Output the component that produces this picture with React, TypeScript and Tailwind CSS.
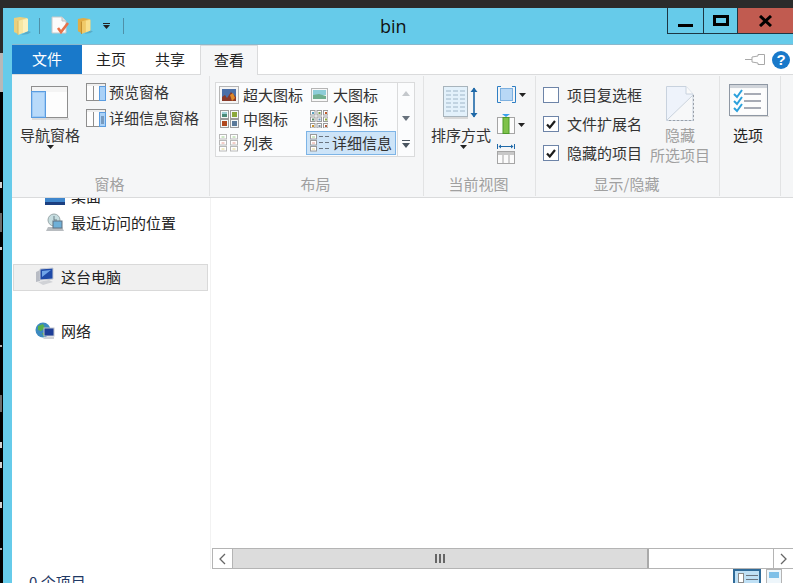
const cjk = "[font-family:'Noto_Sans_CJK_SC','Liberation_Sans',sans-serif]";

function Folder({ w = 18, h = 20, dark }: { w?: number; h?: number; dark?: boolean }) {
  const back = dark ? "#e2ad45" : "#e9cf7e";
  const front = dark ? "#f0c968" : "#f7e6a2";
  const hi = dark ? "#f9e08e" : "#fcf1bf";
  return (
    <svg width={w} height={h} viewBox="0 0 18 20">
      <path d="M15 15 L18 16 L15 18 L8 19 Z" fill="#4f93ad" opacity="0.55" />
      <path d="M1 2 L7 1 L14 2 L14 15 L5 18 L1 16 Z" fill={back} />
      <path d="M5 5 L14 2 L15 3 L15 15 L5 19 Z" fill={front} />
      <path d="M10 4 L15 3 L15 15 L10 17 Z" fill={hi} />
      <path d="M5 5 V19" stroke={dark ? "#b98528" : "#d8b964"} />
    </svg>
  );
}

function DocCheck() {
  return (
    <svg width="19" height="19" viewBox="0 0 19 19">
      <path d="M1 1 H11 L15 5 V17 H1 Z" fill="#fbfbfb" stroke="#c9c9c9" />
      <path d="M11 1 V5 H15" fill="#e2e2e2" stroke="#c0c0c0" />
      <path d="M7 12 L10 16 L17 7" fill="none" stroke="#e8724a" strokeWidth="2.6" />
    </svg>
  );
}

function Caret({ color = "#222" }: { color?: string }) {
  return (
    <svg width="7" height="4" viewBox="0 0 7 4" className="block">
      <path d="M0 0 H7 L3.5 4 Z" fill={color} />
    </svg>
  );
}

function NavPaneIcon() {
  return (
    <svg width="38" height="34" viewBox="0 0 38 34">
      <rect x="0.5" y="0.5" width="36" height="31" fill="#fdfdfd" stroke="#8e8e8e" />
      <rect x="1" y="1" width="35" height="5" fill="#f4f4f4" />
      <rect x="0.5" y="5.5" width="14" height="26" fill="#9cc9f5" stroke="#5a9ce0" />
      <rect x="2" y="7" width="11" height="23" fill="#b8dafa" />
      <rect x="1" y="32" width="37" height="2" fill="#dcdcdc" />
    </svg>
  );
}

function PaneIcon({ details }: { details?: boolean }) {
  return (
    <svg width="20" height="18" viewBox="0 0 20 18">
      <rect x="0.5" y="0.5" width="19" height="17" fill="#fdfdfd" stroke="#8e8e8e" />
      <rect x="1" y="1" width="18" height="2" fill="#efefef" />
      <line x1="7.5" y1="3" x2="7.5" y2="17" stroke="#8e8e8e" />
      <rect x="13.5" y="3.5" width="6" height="14" fill="#a9d1f7" stroke="#5a9ce0" />
      {details && <path d="M15 8 H18 M15 10 H18 M15 12 H18 M15 14 H18" stroke="#44648a" />}
    </svg>
  );
}

function Thumb({ kind }: { kind: string }) {
  if (kind === "xl")
    return (
      <svg width="20" height="18" viewBox="0 0 20 18">
        <rect x="0.5" y="0.5" width="19" height="17" fill="#f5f5f5" stroke="#b5b5b5" />
        <rect x="3" y="3" width="14" height="12" fill="#4a6fa8" />
        <path d="M3 15 V11 L6 9 L8 12 L12 6 L17 11 V15 Z" fill="#8a3a2a" />
        <path d="M11 9 L14 7 L16 12 L13 15 Z" fill="#e08a2a" />
      </svg>
    );
  if (kind === "l")
    return (
      <svg width="17" height="14" viewBox="0 0 17 14">
        <rect x="0.5" y="0.5" width="16" height="13" fill="#f8f8f8" stroke="#b5b5b5" />
        <rect x="2" y="2" width="13" height="5" fill="#8ecdd8" />
        <path d="M2 7 L8 6 L15 8 V11 H2 Z" fill="#6fae8e" />
      </svg>
    );
  if (kind === "m")
    return (
      <svg width="19" height="18" viewBox="0 0 19 18">
        <rect x="0.5" y="0.5" width="8" height="8" fill="#f4f8f8" stroke="#9a9a9a" />
        <rect x="10.5" y="0.5" width="8" height="8" fill="#f4f8f8" stroke="#9a9a9a" />
        <rect x="0.5" y="9.5" width="8" height="8" fill="#f4f8f8" stroke="#9a9a9a" />
        <rect x="10.5" y="9.5" width="8" height="8" fill="#f4f8f8" stroke="#9a9a9a" />
        <rect x="2" y="2" width="5" height="2" fill="#9ccfd6" />
        <rect x="2" y="4" width="5" height="3" fill="#4a8a78" />
        <rect x="12" y="2" width="5" height="5" fill="#8aa83a" />
        <rect x="2" y="11" width="5" height="5" fill="#b0481e" />
        <rect x="12" y="11" width="5" height="5" fill="#5a7a9a" />
      </svg>
    );
  if (kind === "s") {
    const colors = ["#5aa0c0", "#7aa04a", "#c05a2a", "#5a8a6a", "#6a90b8", "#8aa83a", "#c8902a", "#7a8a9a", "#b05a3a"];
    return (
      <svg width="18" height="18" viewBox="0 0 18 18">
        {colors.map((c, i) => (
          <g key={i}>
            <rect x={0.5 + (i % 3) * 6.5} y={0.5 + Math.floor(i / 3) * 6.5} width="4.5" height="4.5" fill="#fff" stroke="#9a9a9a" />
            <rect x={2 + (i % 3) * 6.5} y={2 + Math.floor(i / 3) * 6.5} width="2" height="2" fill={c} />
          </g>
        ))}
      </svg>
    );
  }
  const bullets = ["#9ccf8c", "#e59a8e", "#e4d88a"];
  if (kind === "list")
    return (
      <svg width="20" height="18" viewBox="0 0 20 18">
        {[0, 11].map((x) => (
          <g key={x}>
            {bullets.map((c, i) => (
              <g key={i}>
                <rect x={x + 0.5} y={0.5 + i * 6} width="7" height="4.5" fill="#fff" stroke="#b8b8b8" />
                <rect x={x + 2.5} y={2.5 + i * 6} width="3" height="1" fill={c} />
              </g>
            ))}
          </g>
        ))}
      </svg>
    );
  return (
    <svg width="20" height="18" viewBox="0 0 20 18">
      {bullets.map((c, i) => (
        <g key={i}>
          <rect x="0.5" y={0.5 + i * 6} width="6" height="4.5" fill="#fff" stroke="#9a9a9a" />
          <rect x="2" y={2.5 + i * 6} width="3" height="1" fill={c} />
          <path d={`M9 ${2.5 + i * 6} H13 M15 ${2.5 + i * 6} H19`} stroke="#6a7480" />
        </g>
      ))}
    </svg>
  );
}

function SortIcon() {
  return (
    <svg width="37" height="33" viewBox="0 0 37 33">
      <rect x="0.5" y="0.5" width="24" height="30" fill="#e3f1fb" stroke="#a8b4bc" />
      <rect x="1" y="31" width="24" height="2" fill="#d8d8d8" />
      {[5, 9, 13, 17, 21, 25].map((y) => (
        <path key={y} d={`M3 ${y} H8 M10 ${y} H15 M17 ${y} H22`} stroke="#9fb6c8" />
      ))}
      <path d="M31 2 V31" stroke="#1f69a8" strokeWidth="1.6" />
      <path d="M27.5 6 L31 1.5 L34.5 6 Z M27.5 27 L31 31.5 L34.5 27 Z" fill="#1f69a8" />
    </svg>
  );
}

function GroupByIcon() {
  return (
    <svg width="19" height="17" viewBox="0 0 19 17">
      <path d="M4 .5 H.5 V16.5 H4 M15 .5 H18.5 V16.5 H15" fill="none" stroke="#2f7fc4" />
      <rect x="3.5" y="2.5" width="12" height="12" fill="#b8d8f6" stroke="#7db0df" />
    </svg>
  );
}

function ColumnsIcon() {
  return (
    <svg width="18" height="21" viewBox="0 0 18 21">
      <path d="M5 0 H13 L9 3 Z" fill="#39a0ea" />
      <rect x="0.5" y="3.5" width="17" height="16" fill="#fcfcfc" stroke="#a5a5a5" />
      <rect x="6" y="3.5" width="6" height="16" fill="#7fc24a" stroke="#4d9a2a" />
    </svg>
  );
}

function SizeColumnsIcon() {
  return (
    <svg width="18" height="20" viewBox="0 0 18 20">
      <path d="M.5 0 V5 M17.5 0 V5 M2 2.5 H16" stroke="#1f69a8" fill="none" />
      <path d="M4 .5 L1.5 2.5 L4 4.5 Z M14 .5 L16.5 2.5 L14 4.5 Z" fill="#1f69a8" />
      <rect x="0.5" y="7.5" width="17" height="12" fill="#fbfbfb" stroke="#a5a5a5" />
      <rect x="1" y="8" width="16" height="3" fill="#c8c8c8" />
      <path d="M6 11 V19 M12 11 V19" stroke="#a5a5a5" />
    </svg>
  );
}

function Check({ checked }: { checked?: boolean }) {
  return (
    <span className="flex h-4 w-4 shrink-0 items-center justify-center border border-[#6d84a8] bg-white">
      {checked && (
        <svg width="10" height="9" viewBox="0 0 10 9">
          <path d="M1 4.5 L3.8 7.5 L9 1" fill="none" stroke="#1c1c1c" strokeWidth="2.2" />
        </svg>
      )}
    </span>
  );
}

function HideIcon() {
  return (
    <svg width="28" height="35" viewBox="0 0 28 35">
      <path d="M.5 .5 H20 L27 8 V34 H.5 Z" fill="#eef3fb" />
      <path d="M27 8 L.5 34 H27 Z" fill="#f7f8f9" />
      <path d="M.5 34.5 V.5 H20 L27 8 V34.5 Z" fill="none" stroke="#c8d2de" />
      <path d="M20 .5 V8 H27" fill="#fafafa" stroke="#c8d2de" />
      <path d="M27.5 9 V34.5 H1" fill="none" stroke="#9aa0a8" strokeDasharray="2 2" />
      <path d="M27 9 L1 34" stroke="#c8d2de" />
    </svg>
  );
}

function OptionsIcon() {
  return (
    <svg width="40" height="33" viewBox="0 0 40 33">
      <rect x="0.5" y="0.5" width="38" height="31" fill="#fafafa" stroke="#8f98a4" />
      <rect x="1" y="1" width="37" height="3" fill="#d0d4da" />
      <rect x="3" y="5" width="33" height="25" fill="#fdfdfd" />
      <rect x="1" y="32" width="39" height="1" fill="#d4d4d4" />
      {[10, 17, 24].map((y) => (
        <g key={y}>
          <path d={`M5 ${y} L8 ${y + 3} L13 ${y - 4}`} fill="none" stroke="#2aa0dc" strokeWidth="2" />
          <path d={`M15 ${y} H32`} stroke="#8a8f9c" strokeWidth="1.5" />
        </g>
      ))}
    </svg>
  );
}

function RecentIcon() {
  return (
    <svg width="20" height="20" viewBox="0 0 20 20">
      <circle cx="9" cy="7" r="6" fill="#c6dde0" stroke="#9aa8aa" />
      <path d="M9 3 V7 H12" stroke="#6a8088" fill="none" />
      <path d="M3 14 H17 L19 18 H1 Z" fill="#b8bcc0" />
      <rect x="8" y="8" width="9" height="7" fill="#6fb0d8" stroke="#607080" />
    </svg>
  );
}

function PcIcon() {
  return (
    <svg width="20" height="20" viewBox="0 0 20 20">
      <path d="M1 5 L5 3 V14 L1 15 Z" fill="#b8bcc4" />
      <path d="M5 2 L18 1 V12 L5 13 Z" fill="#1e4aa8" stroke="#c8ccd4" />
      <path d="M7 4 L16 3 L7 10 Z" fill="#6fa4e8" />
      <path d="M3 15 L14 13 L18 15 L8 18 Z" fill="#d0d2d6" />
    </svg>
  );
}

function NetIcon() {
  return (
    <svg width="20" height="20" viewBox="0 0 20 20">
      <circle cx="8" cy="9" r="7.5" fill="#3c8ac0" />
      <path d="M3 5 L8 3 L10 7 L6 10 L3 9 Z M7 12 L11 12 L9 16 Z" fill="#58b04a" />
      <rect x="9" y="7" width="10" height="8" fill="#1e3e98" stroke="#c0c4cc" />
      <path d="M10 16 H19 L19 18 H8 Z" fill="#d0d2d6" />
    </svg>
  );
}

function DesktopIcon() {
  return (
    <svg width="20" height="20" viewBox="0 0 20 20">
      <rect x="0" y="3" width="20" height="13" fill="#3f86cc" />
      <rect x="0" y="16" width="20" height="3" fill="#1c3f80" />
    </svg>
  );
}

function Group({ width, label, children }: { width: string; label: string; children: React.ReactNode }) {
  return (
    <div className={`${width} flex shrink-0 flex-col border-r border-[#e2e3e4]`}>
      <div className="flex h-[99px]">{children}</div>
      <div className="h-[22px] pr-[2px] text-center text-[15px] leading-[19px] text-[#a0a0a0]">{label}</div>
    </div>
  );
}

function GalleryCell({ kind, text, width, selected }: { kind: string; text: string; width: string; selected?: boolean }) {
  return (
    <div className={`flex h-6 items-center ${width} ${selected ? "border border-[#7db4e6] bg-[#cde4f8]" : ""}`}>
      <span className={`flex shrink-0 justify-center ${selected ? "w-[25px]" : "w-[26px]"}`}>
        <Thumb kind={kind} />
      </span>
      <span className={`whitespace-nowrap ${selected ? "" : "pl-[1px]"}`}>{text}</span>
    </div>
  );
}

function NavRow({ icon, text, selected, indent, lift }: { icon: React.ReactNode; text: string; selected?: boolean; indent: string; lift: string }) {
  return (
    <div className={`flex items-center gap-[6px] ${indent} ${selected ? "h-[27px] w-[195px] border border-[#d9d9d9] bg-[#f0f0f0]" : "h-[27px]"}`}>
      <span className={`flex w-5 shrink-0 justify-center ${lift}`}>{icon}</span>
      <span className={`text-[15px] leading-5 text-[#222] ${lift}`}>{text}</span>
    </div>
  );
}

export default function App() {
  return (
    <div className={`flex h-[583px] w-[793px] flex-col overflow-hidden bg-[#2b2b2b] ${cjk} text-[15px] text-[#333]`}>
      <div className="h-2 shrink-0 bg-[#2b2b2b]" />
      <div className="flex min-h-0 flex-1">
        {/* sliver of the desktop behind the window */}
        <div className="flex w-[3px] shrink-0 flex-col bg-black">
          <div className="h-[45px] shrink-0 bg-[#2b2b2b]" />
          <div className="h-[39px] shrink-0 bg-[#b8b8b8]" />
          <div className="mt-[90px] h-[6px] w-[2px] shrink-0 bg-[#d0d0d0]" />
          <div className="mt-[25px] h-[19px] w-[2px] shrink-0 bg-[#6a6a6a]" />
          <div className="mt-[15px] h-[3px] w-[2px] shrink-0 bg-[#d0d0d0]" />
          <div className="mt-[95px] h-[2px] w-[2px] shrink-0 bg-[#b0b0b0]" />
          <div className="mt-[48px] h-[17px] w-[2px] shrink-0 bg-[#6a6a6a]" />
          <div className="mt-[30px] h-[6px] w-[2px] shrink-0 bg-[#d0d0d0]" />
          <div className="mt-[14px] h-[6px] w-[2px] shrink-0 bg-[#d0d0d0]" />
          <div className="mt-[34px] h-[6px] w-[2px] shrink-0 bg-[#d0d0d0]" />
          <div className="mt-[40px] h-[2px] w-[2px] shrink-0 bg-[#b0b0b0]" />
        </div>
        <div className="flex min-w-0 flex-1 bg-[#66cbea]">
          <div className="w-[9px] shrink-0" />
          <div className="flex min-w-0 flex-1 flex-col">
            {/* title bar */}
            <div className="flex h-[37px] shrink-0 border-b border-[#8ab8cc]">
              <div className="flex w-[655px] shrink-0 items-center pb-[1px]">
                <span className="ml-[1px] mr-[8px]"><Folder /></span>
                <span className="mr-[11px] h-[16px] w-[1px] bg-[#4f90a8]" />
                <span className="mr-[7px]"><DocCheck /></span>
                <Folder w={16} dark />
                <span className="ml-[10px] mr-[13px] flex flex-col gap-[1px]">
                  <span className="h-[1px] w-[7px] bg-[#222]" />
                  <Caret />
                </span>
                <span className="h-[16px] w-[1px] bg-[#4f90a8]" />
                <span className="ml-[256px] font-['Open_Sans',sans-serif] text-[18px] leading-6 text-[#111]">bin</span>
              </div>
              <div className="flex h-[26px] border-b border-[#1c3644]">
                <div className="flex w-9 items-end justify-center border-l border-[#1c3644] pb-[6px]">
                  <span className="h-[3px] w-[15px] bg-black" />
                </div>
                <div className="flex w-[34px] items-center justify-center border-l border-[#1c3644]">
                  <span className="h-[11px] w-[16px] border-[3px] border-black" />
                </div>
                <div className="flex w-14 items-center justify-center border-l border-[#1c3644] bg-[#c15b50]">
                  <svg width="13" height="12" viewBox="0 0 13 12">
                    <path d="M1 1 L12 11 M12 1 L1 11" stroke="#000" strokeWidth="3" />
                  </svg>
                </div>
              </div>
            </div>
            {/* tabs */}
            <div className="flex h-[30px] shrink-0 items-stretch border-b border-[#dadbdc] bg-white">
              <div className="flex w-[70px] items-center justify-center bg-[#1979ca] text-white">文件</div>
              <div className="ml-[14px] flex w-[30px] items-center justify-center text-[#222]">主页</div>
              <div className="ml-[29px] flex w-[30px] items-center justify-center text-[#222]">共享</div>
              <div className="relative ml-[15px] mb-[-1px] flex w-[58px] items-center justify-center border-x border-t border-[#dadbdc] bg-[#f5f6f7] text-[#222]">查看</div>
              <div className="flex-1" />
              <div className="flex items-center pr-[3px]">
                <svg width="20" height="11" viewBox="0 0 20 11" className="mr-[7px]">
                  <path d="M0 5.5 H7" stroke="#a8a8a8" />
                  <path d="M7 3 L13 2 V0.5 L19.5 .5 V10.5 H13 V9 L7 8 Z" fill="#fff" stroke="#a8a8a8" />
                </svg>
                <span className="flex h-[18px] w-[18px] items-center justify-center rounded-full bg-[#1979ca] font-['Liberation_Sans',sans-serif] text-[15px] font-bold leading-none text-white">?</span>
              </div>
            </div>
            {/* ribbon */}
            <div className="flex h-[123px] shrink-0 border-b border-[#dadbdc] bg-[#f5f6f7] py-[1px]">
              <Group width="w-[198px]" label="窗格">
                <div className="flex w-[74px] flex-col items-center pt-[10px] pl-[2px]">
                  <span className="h-[34px]"><NavPaneIcon /></span>
                  <span className="mt-[5px] leading-5 text-[#333]">导航窗格</span>
                  <span className="mt-[0px]"><Caret /></span>
                </div>
                <div className="flex flex-col gap-[8px] pt-[7px]">
                  <div className="flex h-[18px] items-center gap-[3px]"><PaneIcon /><span className="whitespace-nowrap">预览窗格</span></div>
                  <div className="flex h-[18px] items-center gap-[3px]"><PaneIcon details /><span className="whitespace-nowrap">详细信息窗格</span></div>
                </div>
              </Group>
              <Group width="w-[214px]" label="布局">
                <div className="ml-[5px] mt-[6px] flex h-[75px] w-[200px] border border-[#dadbdc] bg-[#fbfcfd]">
                  <div className="flex w-[181px] flex-wrap content-start">
                    <GalleryCell kind="xl" text="超大图标" width="w-[90px]" />
                    <GalleryCell kind="l" text="大图标" width="w-[91px]" />
                    <GalleryCell kind="m" text="中图标" width="w-[90px]" />
                    <GalleryCell kind="s" text="小图标" width="w-[91px]" />
                    <GalleryCell kind="list" text="列表" width="w-[90px]" />
                    <GalleryCell kind="d" text="详细信息" width="w-[90px]" selected />
                  </div>
                  <div className="flex w-[17px] flex-col items-center justify-between border-l border-[#dadbdc] py-[8px]">
                    <svg width="8" height="5" viewBox="0 0 8 5"><path d="M0 5 L4 0 L8 5 Z" fill="#c4c8cc" /></svg>
                    <svg width="8" height="5" viewBox="0 0 8 5"><path d="M0 0 H8 L4 5 Z" fill="#67717c" /></svg>
                    <svg width="8" height="8" viewBox="0 0 8 8"><path d="M0 0 H8 V1 H0 Z M0 3 H8 L4 8 Z" fill="#4a5560" /></svg>
                  </div>
                </div>
              </Group>
              <Group width="w-[112px]" label="当前视图">
                <div className="flex w-[73px] flex-col items-center pt-[10px]">
                  <span className="ml-[2px] h-[33px]"><SortIcon /></span>
                  <span className="mt-[6px] ml-[1px] whitespace-nowrap leading-5">排序方式</span>
                  <span className="mt-[0px] ml-[5px]"><Caret /></span>
                </div>
                <div className="flex flex-col pt-[10px]">
                  <div className="flex h-[17px] items-center gap-[3px]"><GroupByIcon /><Caret /></div>
                  <div className="mt-[11px] flex h-[21px] items-center gap-[3px]"><ColumnsIcon /><Caret /></div>
                  <div className="mt-[9px]"><SizeColumnsIcon /></div>
                </div>
              </Group>
              <Group width="w-[184px]" label="显示/隐藏">
                <div className="flex w-[114px] flex-col gap-[13px] pl-[7px] pt-[11px]">
                  <div className="flex h-4 items-center gap-2 whitespace-nowrap"><Check /><span>项目复选框</span></div>
                  <div className="flex h-4 items-center gap-2 whitespace-nowrap"><Check checked /><span>文件扩展名</span></div>
                  <div className="flex h-4 items-center gap-2 whitespace-nowrap"><Check checked /><span>隐藏的项目</span></div>
                </div>
                <div className="flex w-[60px] flex-col items-center pt-[10px] text-[#a0a0a0]">
                  <span className="h-[35px]"><HideIcon /></span>
                  <span className="mt-[4px] leading-5">隐藏</span>
                  <span className="whitespace-nowrap leading-5">所选项目</span>
                </div>
              </Group>
              <Group width="w-[61px]" label="">
                <div className="flex w-full flex-col items-center pr-[4px] pt-[8px]">
                  <span className="h-[33px] pl-[2px]"><OptionsIcon /></span>
                  <span className="mt-[8px] leading-5 text-[#222]">选项</span>
                </div>
              </Group>
              <div className="flex-1" />
            </div>
            {/* body */}
            <div className="flex min-h-0 flex-1 bg-white">
              <div className="w-[199px] shrink-0 overflow-hidden border-r border-[#f2f2f2]">
                <div className="mt-[-14px]">
                  <NavRow indent="pl-[33px]" lift="pb-[4px]" icon={<DesktopIcon />} text="桌面" />
                  <NavRow indent="pl-[33px]" lift="pb-[4px]" icon={<RecentIcon />} text="最近访问的位置" />
                  <div className="mt-[26px] pl-[1px]">
                    <NavRow selected indent="pl-[21px]" lift="pb-[2px]" icon={<PcIcon />} text="这台电脑" />
                  </div>
                  <div className="mt-[27px]">
                    <NavRow indent="pl-[23px]" lift="pb-[2px]" icon={<NetIcon />} text="网络" />
                  </div>
                </div>
              </div>
              <div className="flex min-w-0 flex-1 flex-col justify-end pl-[1px]">
                <div className="flex h-[21px] border-y border-[#b4b4b4]">
                  <div className="flex w-[21px] items-center justify-center border-x border-[#b4b4b4]">
                    <svg width="7" height="12" viewBox="0 0 7 12"><path d="M6 1 L1 6 L6 11" fill="none" stroke="#666" strokeWidth="1.3" /></svg>
                  </div>
                  <div className="flex w-[416px] items-center justify-center gap-[2px] border-r-2 border-[#aaa] bg-[#dcdcdc]">
                    <span className="h-[9px] w-[2px] bg-[#666]" />
                    <span className="h-[9px] w-[2px] bg-[#666]" />
                    <span className="h-[9px] w-[2px] bg-[#666]" />
                  </div>
                  <div className="flex-1" />
                  <div className="flex w-[20px] items-center justify-center border-l border-[#b4b4b4]">
                    <svg width="7" height="12" viewBox="0 0 7 12"><path d="M1 1 L6 6 L1 11" fill="none" stroke="#666" strokeWidth="1.3" /></svg>
                  </div>
                </div>
              </div>
            </div>
            {/* status */}
            <div className="flex h-[14px] shrink-0 overflow-hidden bg-white">
              <div className="w-[199px] pl-[17px] pt-[3px] text-[15px] leading-5 text-[#1f3864]">0 个项目</div>
              <div className="flex-1" />
              <div className="flex h-full">
                <div className="flex h-full w-[28px] gap-[2px] border-x-2 border-t-2 border-[#2f6a98] bg-[#bfe0f5] pl-[3px] pt-[2px]">
                  <span className="h-[10px] w-[6px] border border-[#8a8a8a] bg-white" />
                  <span className="flex flex-col gap-[3px] pt-[2px]">
                    <span className="block h-[1px] w-[12px] bg-[#6a7480]" />
                    <span className="block h-[1px] w-[12px] bg-[#6a7480]" />
                  </span>
                </div>
                <div className="ml-[5px] mr-[11px] h-full w-[16px] border-x border-t border-[#b4b4b4] bg-[#eef6fb] pl-[2px] pt-[2px]">
                  <span className="block h-[6px] w-[10px] bg-[#7fc0e8]" />
                </div>
              </div>
            </div>
          </div>
        </div>
      </div>
    </div>
  );
}
